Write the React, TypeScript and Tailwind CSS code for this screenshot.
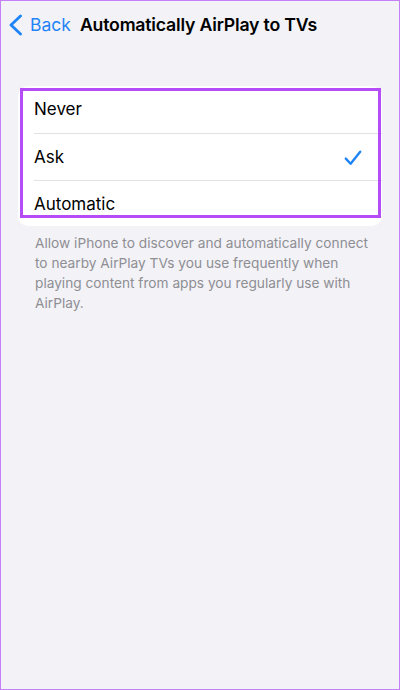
import React from 'react';

const options = ['Never', 'Ask', 'Automatic'];

const ChevronLeft = () => (
    <svg width="14" height="22" viewBox="0 0 14 22" fill="none">
        <path d="M12.5 2 L3 11 L12.5 20" stroke="#1f84f7" strokeWidth="2.8" strokeLinecap="round" strokeLinejoin="round" />
    </svg>
);

const Check = () => (
    <svg width="18" height="16" viewBox="0 0 18 16" fill="none">
        <path d="M1.8 8.6 L6.6 13.8 L16.2 1.8" stroke="#1f84f7" strokeWidth="2.4" strokeLinecap="round" strokeLinejoin="round" />
    </svg>
);

export default function App() {
    const selected = 'Ask';

    return (
        <div
            className="w-[400px] h-[690px] bg-[#f2f2f7] border border-[#c481f7] flex flex-col overflow-hidden"
            style={{ fontFamily: 'Inter, "Liberation Sans", sans-serif' }}
        >
            {/* nav bar */}
            <div className="h-12 flex items-center pl-[7px] shrink-0">
                <div className="flex items-center gap-[8px] text-[#1f84f7] text-[17.5px]">
                    <ChevronLeft />
                    <span>Back</span>
                </div>
                <span className="ml-[9px] text-[17.7px] font-semibold text-black tracking-[-0.2px]">
                    Automatically AirPlay to TVs
                </span>
            </div>

            {/* options card */}
            <div className="relative mx-[17px] mt-[37px] bg-white rounded-[10px]">
                {options.map((opt, i) => (
                    <div
                        key={opt}
                        className={`pl-[16px] ${i > 0 ? 'pt-px' : ''}`}
                    >
                        <div
                            className={`h-[46px] flex items-center pr-[20px] pt-[2px] ${i > 0 ? 'border-t border-[#e2e2e6]' : ''}`}
                        >
                            <span className="flex-1 text-[17px] text-black">{opt}</span>
                            {opt === selected && <Check />}
                        </div>
                    </div>
                ))}
                {/* highlight box drawn on top */}
                <div className="absolute left-[2px] top-[2px] right-px bottom-[8px] border-[3px] border-[#b64cf8] pointer-events-none" />
            </div>

            <p className="ml-[34px] mr-[20px] mt-[7px] text-[13.7px] leading-[20px] text-[#8e8e93]">
                Allow iPhone to discover and automatically connect to nearby AirPlay TVs you use frequently when playing content from apps you regularly use with AirPlay.
            </p>
        </div>
    );
}
